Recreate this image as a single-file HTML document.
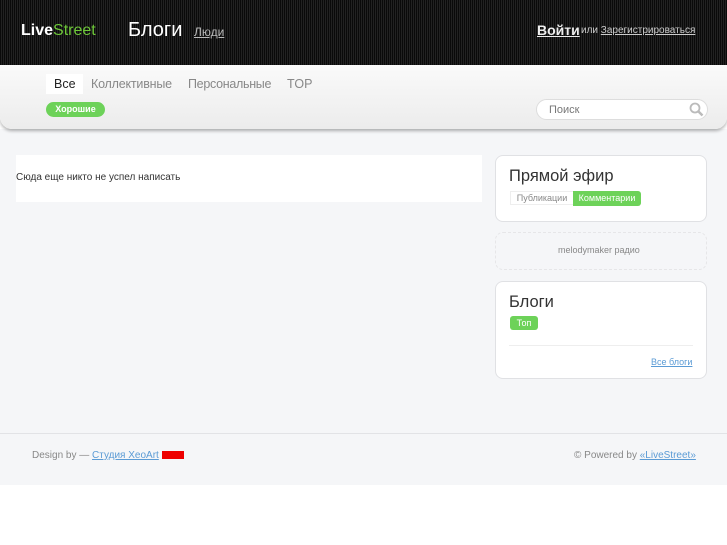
<!DOCTYPE html>
<html><head><meta charset="utf-8"><style>
*{margin:0;padding:0;box-sizing:border-box}
body{width:727px;height:545px;background:#fff;font-family:"Liberation Sans",Arial,sans-serif;position:relative;overflow:hidden}
.hd{position:absolute;left:0;top:0;width:727px;height:65px;background:#111 repeating-linear-gradient(90deg,#0a0a0a 0 1px,#222 1px 2px)}
.abs{position:absolute;white-space:nowrap}
.nav{position:absolute;left:0;top:65px;width:727px;height:64px;background:linear-gradient(#fafafa,#ececec);border-radius:0 0 12px 12px;box-shadow:0 2px 3px rgba(0,0,0,.3)}
.main{position:absolute;left:0;top:129px;width:727px;height:356px;background:#f5f6f8}
.box{position:absolute;background:#fff;border:1px solid #e0e1e4;border-radius:8px}
a{color:inherit}
</style></head><body>
<div class="hd"></div>
<div class="abs" style="left:21px;top:22px;font-size:16px;font-weight:bold;color:#fff">Live<span style="color:#6fc93a;font-weight:normal">Street</span></div>
<div class="abs" style="left:128px;top:19px;font-size:20px;color:#fff">Блоги</div>
<div class="abs" style="left:194px;top:25px;font-size:12px;color:#bbb;text-decoration:underline">Люди</div>
<div class="abs" style="left:537px;top:22px;font-size:14px;font-weight:bold;color:#eee;text-decoration:underline">Войти</div>
<div class="abs" style="left:581px;top:25px;font-size:10px;color:#ccc">или <span style="text-decoration:underline">Зарегистрироваться</span></div>
<div class="main"></div>
<div class="nav"></div>
<div class="abs" style="left:46px;top:74px;width:37px;height:20px;background:#fff"></div>
<div class="abs" style="left:54px;top:77px;font-size:12.5px;color:#222">Все</div>
<div class="abs" style="left:91px;top:77px;font-size:12.5px;color:#888;letter-spacing:-0.2px">Коллективные</div>
<div class="abs" style="left:188px;top:77px;font-size:12.5px;color:#888;letter-spacing:-0.3px">Персональные</div>
<div class="abs" style="left:287px;top:77px;font-size:12.5px;color:#888">TOP</div>
<div class="abs" style="left:46px;top:102px;width:59px;height:15px;background:#6dd259;border-radius:8px;color:#fff;font-size:9px;font-weight:bold;text-align:center;line-height:15px">Хорошие</div>
<div class="abs" style="left:536px;top:99px;width:172px;height:21px;background:#fff;border:1px solid #ddd;border-radius:11px;font-size:11px;color:#777;padding:4px 0 0 12px">Поиск</div>
<svg class="abs" style="left:689px;top:102px" width="15" height="15"><circle cx="6" cy="6" r="4.5" fill="none" stroke="#bbb" stroke-width="1.8"/><path d="M9.5 9.5l4 4" stroke="#bbb" stroke-width="2.5"/></svg>
<div class="abs" style="left:16px;top:155px;width:466px;height:47px;background:#fff"></div>
<div class="abs" style="left:16px;top:172px;font-size:10px;color:#333">Сюда еще никто не успел написать</div>
<div class="box" style="left:495px;top:155px;width:212px;height:67px"></div>
<div class="abs" style="left:509px;top:167px;font-size:16.5px;color:#333">Прямой эфир</div>
<div class="abs" style="left:510px;top:191px;width:64px;height:14px;border:1px solid #eee;font-size:9px;color:#888;text-align:center;line-height:12px">Публикации</div>
<div class="abs" style="left:573px;top:191px;width:68px;height:15px;background:#6dd259;border-radius:0 3px 3px 0;font-size:9px;color:#fff;text-align:center;line-height:14px">Комментарии</div>
<div class="box" style="left:495px;top:232px;width:212px;height:38px;background:#f5f6f8;border:1px dashed #e6e6e8"></div>
<div class="abs" style="left:558px;top:245px;font-size:9px;color:#888">melodymaker радио</div>
<div class="box" style="left:495px;top:281px;width:212px;height:98px"></div>
<div class="abs" style="left:509px;top:293px;font-size:16.5px;color:#333">Блоги</div>
<div class="abs" style="left:510px;top:316px;width:28px;height:14px;background:#6dd259;border-radius:3px;font-size:9px;color:#fff;text-align:center;line-height:14px">Топ</div>
<div class="abs" style="left:509px;top:345px;width:184px;height:1px;background:#eee"></div>
<div class="abs" style="left:651px;top:357px;font-size:9px;color:#5b9bd5;text-decoration:underline">Все блоги</div>
<div class="abs" style="left:0;top:433px;width:727px;height:1px;background:#e2e3e6"></div>
<div class="abs" style="left:32px;top:450px;font-size:10px;color:#888">Design by — <span style="color:#5b9bd5;text-decoration:underline">Студия XeoArt</span> <span style="display:inline-block;width:22px;height:8px;background:#e00;vertical-align:middle"></span></div>
<div class="abs" style="left:574px;top:450px;font-size:10px;color:#888">© Powered by <span style="color:#5b9bd5;text-decoration:underline">«LiveStreet»</span></div>
</body></html>
